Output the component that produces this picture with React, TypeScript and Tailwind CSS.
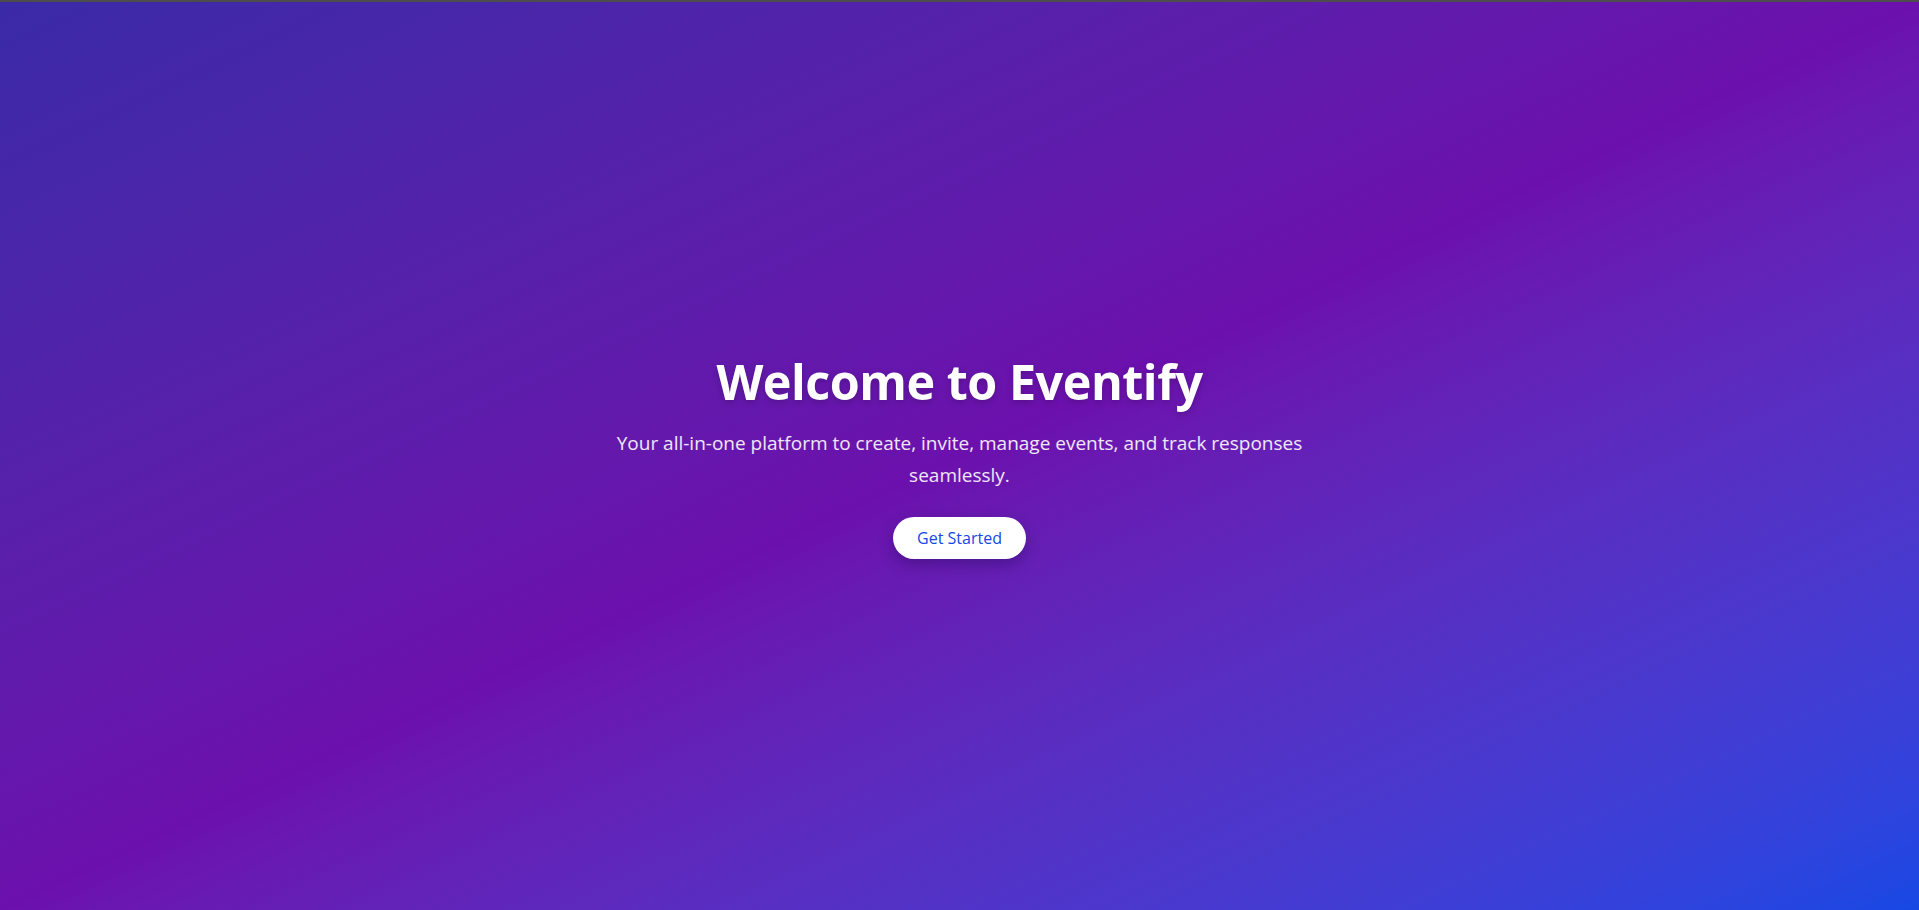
export default function App() {
  return (
    <div className="flex h-screen flex-col font-['Open_Sans','Noto_Sans',sans-serif]">
      <div className="h-[2px] bg-[#4d4d4d]" />
      <main className="flex flex-1 items-center justify-center bg-gradient-to-br from-[#3a2aa8] via-[#6c10ad] to-[#1648e4] px-6 pt-1 text-center">
        <div className="flex flex-col items-center">
          <h1 className="mb-[21px] text-[48.5px] leading-none font-bold tracking-[-0.01em] text-white drop-shadow-[0_2px_3px_rgba(0,0,0,0.2)]">
            Welcome to Eventify
          </h1>
          <p className="mb-[26px] max-w-[700px] text-[19px] leading-8 text-white/90">
            Your all-in-one platform to create, invite, manage events, and track
            responses seamlessly.
          </p>
          <button className="rounded-full bg-white px-6 py-[9px] text-base font-medium text-blue-700 shadow-[0_6px_14px_rgba(30,10,80,0.35)]">
            Get Started
          </button>
        </div>
      </main>
    </div>
  );
}
